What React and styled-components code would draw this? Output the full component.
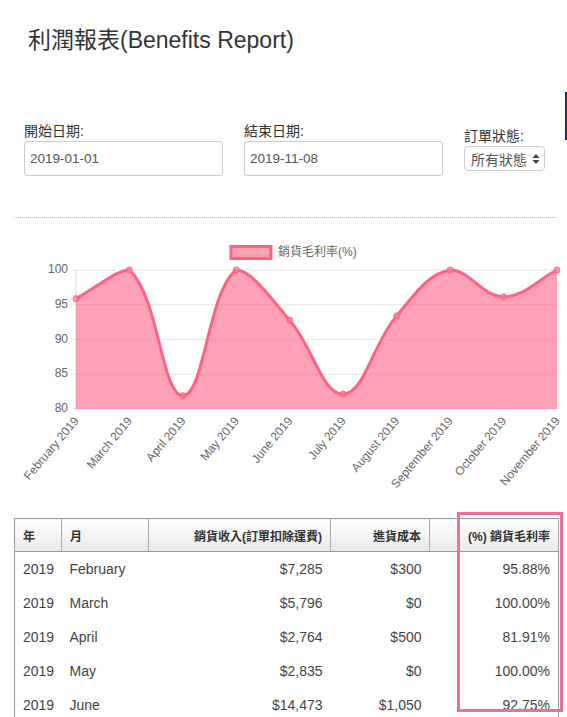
import React from 'react';
import styled, { createGlobalStyle } from 'styled-components';

const GlobalStyle = createGlobalStyle`
  html, body {
    margin: 0;
    padding: 0;
    background: #fff;
  }
  body {
    font-family: "Liberation Sans", "Noto Sans CJK TC", sans-serif;
    color: #333;
  }
`;

const Page = styled.div`
  position: relative;
  width: 567px;
  height: 717px;
  overflow: hidden;
`;

const Title = styled.h2`
  margin: 0;
  padding: 26px 0 0 28px;
  font-size: 23px;
  line-height: 28px;
  font-weight: normal;
  color: #333;
`;

const EdgeBar = styled.div`
  position: absolute;
  right: 0;
  top: 92px;
  width: 2px;
  height: 48px;
  background: #1d2d4a;
`;

const Filters = styled.div`
  display: flex;
  align-items: center;
  gap: 21px;
  margin-top: 68px;
  padding-left: 24px;
`;

const Field = styled.div`
  display: flex;
  flex-direction: column;
  gap: 1px;
`;

const Label = styled.label`
  font-size: 14px;
  line-height: 18px;
  color: #333;
`;

const DateInput = styled.input`
  box-sizing: border-box;
  width: 199px;
  height: 35px;
  margin: 0;
  padding: 0 5px;
  border: 1px solid #ccc;
  border-radius: 3px;
  font-family: inherit;
  font-size: 13.5px;
  color: #555;
  background: #fff;
  outline: none;
`;

const SelectBox = styled.div`
  box-sizing: border-box;
  width: 81px;
  height: 25px;
  display: flex;
  align-items: center;
  justify-content: space-between;
  padding: 0 4px 0 6px;
  border: 1px solid #ccc;
  border-radius: 4px;
  font-size: 14px;
  color: #555;
  background: #fff;
`;

const Separator = styled.div`
  margin: 41px 10px 0 14px;
  border-top: 1px dotted #bbb;
`;

const ChartSvg = styled.svg`
  display: block;
  font-family: "Liberation Sans", "Noto Sans CJK TC", sans-serif;
`;

const TableWrap = styled.div`
  position: relative;
  width: 544px;
  margin: 18px 0 0 14px;
`;

const Table = styled.table`
  width: 544px;
  table-layout: fixed;
  border-collapse: collapse;
  border: 1px solid #999;
`;

const Th = styled.th`
  height: 32px;
  padding: 0 8px;
  font-size: 12px;
  font-weight: bold;
  color: #333;
  text-align: ${(p) => (p.$right ? 'right' : 'left')};
  background: linear-gradient(#ffffff, #e9e9e9);
  border-right: 1px solid #aaa;
  border-bottom: 1px solid #999;
`;

const Td = styled.td`
  height: 34px;
  padding: 0 8px;
  font-size: 14px;
  color: #444;
  text-align: ${(p) => (p.$right ? 'right' : 'left')};
  white-space: nowrap;
`;

const Highlight = styled.div`
  position: absolute;
  left: 443px;
  top: -6px;
  width: 106px;
  height: 200px;
  box-sizing: border-box;
  border: 3px solid #e8709c;
  pointer-events: none;
`;

const months = ['February', 'March', 'April', 'May', 'June', 'July', 'August', 'September', 'October', 'November'];
const values = [95.88, 100, 81.91, 100, 92.75, 82.16, 93.4, 100, 96.16, 100];

const rows = [
  ['2019', 'February', '$7,285', '$300', '95.88%'],
  ['2019', 'March', '$5,796', '$0', '100.00%'],
  ['2019', 'April', '$2,764', '$500', '81.91%'],
  ['2019', 'May', '$2,835', '$0', '100.00%'],
  ['2019', 'June', '$14,473', '$1,050', '92.75%'],
];

const LEFT = 76;
const RIGHT = 557;
const TOP = 270;
const BOTTOM = 409;

const points = values.map((v, i) => ({
  x: LEFT + ((RIGHT - LEFT) * i) / (values.length - 1),
  y: BOTTOM - ((v - 80) * (BOTTOM - TOP)) / 20,
}));

const cap = (y) => Math.min(BOTTOM, Math.max(TOP, y));

// chart.js style spline control points, capped to the plot area
const controls = points.map((p, i) => {
  const prev = points[i - 1] || p;
  const next = points[i + 1] || p;
  const d01 = Math.hypot(p.x - prev.x, p.y - prev.y);
  const d12 = Math.hypot(next.x - p.x, next.y - p.y);
  const s01 = d01 + d12 ? d01 / (d01 + d12) : 0;
  const s12 = d01 + d12 ? d12 / (d01 + d12) : 0;
  const fa = 0.4 * s01;
  const fb = 0.4 * s12;
  return {
    prev: { x: p.x - fa * (next.x - prev.x), y: cap(p.y - fa * (next.y - prev.y)) },
    next: { x: p.x + fb * (next.x - prev.x), y: cap(p.y + fb * (next.y - prev.y)) },
  };
});

let linePath = `M${points[0].x},${points[0].y}`;
for (let i = 1; i < points.length; i++) {
  const a = controls[i - 1].next;
  const b = controls[i].prev;
  linePath += ` C${a.x},${a.y} ${b.x},${b.y} ${points[i].x},${points[i].y}`;
}
const areaPath = `${linePath} L${RIGHT},${BOTTOM} L${LEFT},${BOTTOM} Z`;

const ticks = [100, 95, 90, 85, 80];

function Chart() {
  return (
    <ChartSvg width="567" height="282" viewBox="0 218 567 282">
      <rect x="231" y="246.5" width="40" height="12" fill="rgba(255,99,132,0.6)" stroke="#ff6384" strokeWidth="3" />
      <text x="278" y="253" fontSize="12" fill="#666" dominantBaseline="middle">銷貨毛利率(%)</text>
      {ticks.map((t) => {
        const y = BOTTOM - ((t - 80) * (BOTTOM - TOP)) / 20;
        return (
          <g key={t}>
            <line x1={LEFT - 3} x2={RIGHT} y1={y} y2={y} stroke="rgba(0,0,0,0.1)" strokeWidth="1" />
            <text x="68" y={y} fontSize="12" fill="#666" textAnchor="end" dominantBaseline="middle">{t}</text>
          </g>
        );
      })}
      <line x1={LEFT} x2={LEFT} y1={TOP} y2={BOTTOM} stroke="rgba(0,0,0,0.15)" strokeWidth="1" />
      <path d={areaPath} fill="rgba(255,99,132,0.6)" />
      <path d={linePath} fill="none" stroke="#ff6384" strokeWidth="3" />
      {points.map((p, i) => (
        <circle key={i} cx={p.x} cy={p.y} r="3" fill="rgba(255,120,150,0.7)" stroke="#ff6384" strokeWidth="1" />
      ))}
      {points.map((p, i) => (
        <text
          key={months[i]}
          x={p.x + 1}
          y="419"
          fontSize="12"
          fill="#666"
          textAnchor="end"
          dominantBaseline="middle"
          transform={`rotate(-50 ${p.x + 1} 419)`}
        >
          {months[i]} 2019
        </text>
      ))}
    </ChartSvg>
  );
}

function SortArrows() {
  return (
    <svg width="8" height="12" viewBox="0 0 8 12">
      <path d="M4 1 L7.5 5 L0.5 5 Z" fill="#444" />
      <path d="M4 11 L7.5 7 L0.5 7 Z" fill="#444" />
    </svg>
  );
}

export default function App() {
  return (
    <Page>
      <GlobalStyle />
      <EdgeBar />
      <Title>利潤報表(Benefits Report)</Title>
      <Filters>
        <Field>
          <Label>開始日期:</Label>
          <DateInput value="2019-01-01" readOnly />
        </Field>
        <Field>
          <Label>結束日期:</Label>
          <DateInput value="2019-11-08" readOnly />
        </Field>
        <Field>
          <Label>訂單狀態:</Label>
          <SelectBox>
            <span>所有狀態</span>
            <SortArrows />
          </SelectBox>
        </Field>
      </Filters>
      <Separator />
      <Chart />
      <TableWrap>
        <Table>
          <colgroup>
            <col style={{ width: 47 }} />
            <col style={{ width: 87 }} />
            <col style={{ width: 182 }} />
            <col style={{ width: 99 }} />
            <col style={{ width: 129 }} />
          </colgroup>
          <thead>
            <tr>
              <Th>年</Th>
              <Th>月</Th>
              <Th $right>銷貨收入(訂單扣除運費)</Th>
              <Th $right>進貨成本</Th>
              <Th $right>(%) 銷貨毛利率</Th>
            </tr>
          </thead>
          <tbody>
            {rows.map((r) => (
              <tr key={r[1]}>
                <Td>{r[0]}</Td>
                <Td>{r[1]}</Td>
                <Td $right>{r[2]}</Td>
                <Td $right>{r[3]}</Td>
                <Td $right>{r[4]}</Td>
              </tr>
            ))}
          </tbody>
        </Table>
        <Highlight />
      </TableWrap>
    </Page>
  );
}
